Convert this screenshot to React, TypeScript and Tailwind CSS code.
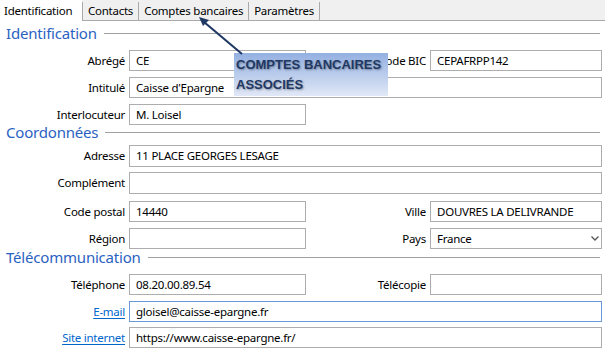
import React from "react";

const FONT = "font-['Noto_Sans','Open_Sans',sans-serif]";

function Input({
  value,
  className = "",
  focused = false,
  select = false,
}: {
  value?: string;
  className?: string;
  focused?: boolean;
  select?: boolean;
}) {
  return (
    <div
      className={`h-full flex items-center pl-[6px] pr-[2px] border bg-white text-black ${
        focused ? "border-[#6a9bd8]" : "border-[#adadad]"
      } ${className}`}
    >
      <span className="flex-1 whitespace-nowrap">{value}</span>
      {select && (
        <svg width="8" height="5" viewBox="0 0 8 5">
          <path d="M0.5 0.5 L4 4 L7.5 0.5" fill="none" stroke="#555" strokeWidth="1.3" />
        </svg>
      )}
    </div>
  );
}

function Label({ text, link = false, w }: { text: string; link?: boolean; w: string }) {
  return (
    <div className={`${w} shrink-0 text-right pr-[4px] whitespace-nowrap`}>
      {link ? (
        <span className="text-[#0066cc] underline underline-offset-[2px]">{text}</span>
      ) : (
        <span className="text-black">{text}</span>
      )}
    </div>
  );
}

function Row({
  label,
  value,
  full = false,
  link = false,
  focused = false,
  right,
  h = "h-[21px]",
  mt,
}: {
  label: string;
  value?: string;
  full?: boolean;
  link?: boolean;
  focused?: boolean;
  right?: { label: string; value?: string; select?: boolean };
  h?: string;
  mt: string;
}) {
  return (
    <div className={`flex items-center ${h} ${mt} pr-[3px]`}>
      <Label text={label} link={link} w="w-[129px]" />
      {full ? (
        <Input value={value} className="flex-1" focused={focused} />
      ) : (
        <Input value={value} className="w-[177px] shrink-0" />
      )}
      {right && (
        <>
          <Label text={right.label} w="w-[124px]" />
          <Input value={right.value} className="flex-1" select={right.select} />
        </>
      )}
    </div>
  );
}

function Section({ title, mt }: { title: string; mt: string }) {
  return (
    <div className={`flex items-center h-[16px] ${mt} pl-[6px] pr-[5px]`}>
      <span className="text-[15px] leading-[16px] tracking-[-0.2px] text-[#2a62c2] whitespace-nowrap">
        {title}
      </span>
      <div className="flex-1 h-px bg-[#a0a0a0] ml-[7px]" />
    </div>
  );
}

function Tabs() {
  const tabs = ["Contacts", "Comptes bancaires", "Paramètres"];
  return (
    <div className="flex h-[21px] bg-[#f0f0f0]">
      <div className="w-[82px] h-full bg-white flex items-center pl-[4px] text-black whitespace-nowrap">
        Identification
      </div>
      <div className="flex-1 flex border-b border-[#a9a9a9]">
        {tabs.map((t) => (
          <div
            key={t}
            className="mt-[2px] border-l border-[#a9a9a9] flex items-center px-[5px] text-black whitespace-nowrap"
          >
            {t}
          </div>
        ))}
        <div className="mt-[2px] border-l border-[#a9a9a9]" />
      </div>
    </div>
  );
}

export default function App() {
  return (
    <div
      className={`relative w-[605px] h-[350px] bg-white overflow-hidden text-[11.5px] tracking-[-0.25px] ${FONT}`}
    >
      <Tabs />
      <Section title="Identification" mt="mt-[4px]" />
      <Row label="Abrégé" value="CE" mt="mt-[9px]" right={{ label: "Code BIC", value: "CEPAFRPP142" }} />
      <Row label="Intitulé" value="Caisse d'Epargne" full mt="mt-[6px]" />
      <Row label="Interlocuteur" value="M. Loisel" mt="mt-[6px]" />
      <Section title="Coordonnées" mt="mt-[-1px]" />
      <Row label="Adresse" value="11 PLACE GEORGES LESAGE" full h="h-[22px]" mt="mt-[5px]" />
      <Row label="Complément" value="" full h="h-[22px]" mt="mt-[5px]" />
      <Row
        label="Code postal"
        value="14440"
        mt="mt-[7px]"
        right={{ label: "Ville", value: "DOUVRES LA DELIVRANDE" }}
      />
      <Row
        label="Région"
        value=""
        mt="mt-[6px]"
        right={{ label: "Pays", value: "France", select: true }}
      />
      <Section title="Télécommunication" mt="mt-[0px]" />
      <Row
        label="Téléphone"
        value="08.20.00.89.54"
        mt="mt-[9px]"
        right={{ label: "Télécopie", value: "" }}
      />
      <Row label="E-mail" value="gloisel@caisse-epargne.fr" full link focused mt="mt-[6px]" />
      <Row label="Site internet" value="https://www.caisse-epargne.fr/" full link mt="mt-[5px]" />

      {/* Callout */}
      <div className="absolute left-[234px] top-[53px] w-[154px] h-[43px] bg-gradient-to-b from-[#93b0e1] to-[#e1e8f6] pl-[2px] pt-[2px] font-['Liberation_Sans',Arial,sans-serif] font-bold text-[13px] tracking-normal leading-[20px] text-[#1f3864] [text-shadow:1px_1px_2px_rgba(0,0,0,0.35)]">
        <div>COMPTES BANCAIRES</div>
        <div>ASSOCIÉS</div>
      </div>
      <svg className="absolute left-0 top-0 pointer-events-none" width="605" height="350">
        <line x1="242" y1="54" x2="204" y2="22" stroke="#1f3864" strokeWidth="2" />
        <polygon points="199,17 209,20 203,26" fill="#1f3864" />
      </svg>
    </div>
  );
}
